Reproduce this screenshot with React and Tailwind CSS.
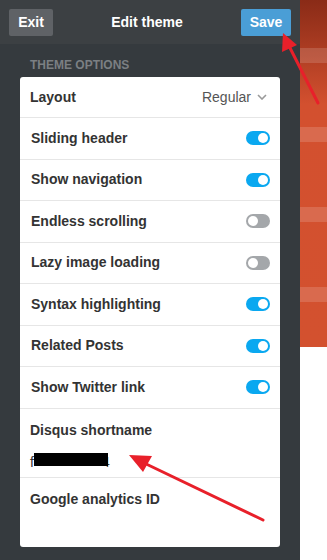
import React from "react";

const Toggle = ({ on }) => (
  <span
    className={`relative inline-block w-[24px] h-[14px] rounded-full ${
      on ? "bg-[#0aa8f0]" : "bg-[#a4a7aa]"
    }`}
  >
    <span
      className={`absolute top-[2px] w-[10px] h-[10px] rounded-full bg-white ${
        on ? "right-[2px]" : "left-[2px]"
      }`}
    />
  </span>
);

const options = [
  { label: "Sliding header", on: true },
  { label: "Show navigation", on: true },
  { label: "Endless scrolling", on: false },
  { label: "Lazy image loading", on: false },
  { label: "Syntax highlighting", on: true },
  { label: "Related Posts", on: true },
  { label: "Show Twitter link", on: true },
];

export default function App() {
  return (
    <div
      className="relative flex w-[327px] h-[560px] overflow-hidden"
      style={{ fontFamily: '"Liberation Sans", Arial, sans-serif' }}
    >
      {/* sidebar */}
      <div className="w-[300px] h-full bg-[#353a3e] flex flex-col">
        <div className="h-[44px] bg-[#3c4043] flex items-center justify-between px-[9px]">
          <button className="w-[44px] h-[27px] rounded-[2px] bg-[#5f6266] text-white text-[14px] font-bold">
            Exit
          </button>
          <span className="text-white text-[14px] font-bold">Edit theme</span>
          <button className="w-[50px] h-[27px] rounded-[2px] bg-[#4a9ed6] text-white text-[14px] font-bold">
            Save
          </button>
        </div>

        <div className="px-[30px] pt-[12px] h-[33px] text-[12px] font-bold text-[#7b7f83] uppercase">
          Theme options
        </div>

        <div className="mx-[20px] bg-white rounded-[3px] text-[14px] font-bold text-[#333]">
          <div className="h-[41px] flex items-center justify-between pl-[10px] pr-[13px] border-b border-[#e6e6e6]">
            <span>Layout</span>
            <span className="flex items-center gap-[6px] font-normal text-[#555]">
              Regular
              <svg width="10" height="6" viewBox="0 0 10 6">
                <path d="M1 1l4 4 4-4" fill="none" stroke="#9a9a9a" strokeWidth="1.6" />
              </svg>
            </span>
          </div>

          {options.map((o) => (
            <div
              key={o.label}
              className="h-[41.5px] flex items-center justify-between pl-[11px] pr-[10px] border-b border-[#e6e6e6]"
            >
              <span>{o.label}</span>
              <Toggle on={o.on} />
            </div>
          ))}

          <div className="h-[69px] pl-[10px] pt-[11px] border-b border-[#e6e6e6]">
            <div>Disqus shortname</div>
            <div className="relative mt-[11px] font-normal text-[#333] h-[16px]">
              f
              <span className="absolute left-[72px] top-0">4</span>
              <span className="absolute left-[4px] top-[1px] w-[74px] h-[13px] bg-black" />
            </div>
          </div>

          <div className="h-[69px] pl-[10px] pt-[11px]">Google analytics ID</div>
        </div>
      </div>

      {/* page behind */}
      <div className="flex-1 flex flex-col">
        <div className="h-[347px] bg-gradient-to-b from-[#8a2b17] via-[#d3502f] via-30% to-[#d3512f] flex flex-col">
          <div className="h-[48px]" />
          <div className="h-[15px] bg-white/15" />
          <div className="h-[64px]" />
          <div className="h-[15px] bg-white/15" />
          <div className="h-[65px]" />
          <div className="h-[15px] bg-white/15" />
          <div className="h-[65px]" />
          <div className="h-[15px] bg-white/15" />
        </div>
        <div className="flex-1 bg-white" />
      </div>

      {/* red annotation arrows */}
      <svg className="absolute inset-0 pointer-events-none" width="327" height="560">
        <line x1="318" y1="103" x2="288" y2="44" stroke="#e8202a" strokeWidth="3" strokeLinecap="round" />
        <polygon points="283,33 282,52 297,45" fill="#e8202a" />
        <line x1="263" y1="520" x2="142" y2="462" stroke="#e8202a" strokeWidth="3" strokeLinecap="round" />
        <polygon points="129,455 143,472 152,456" fill="#e8202a" />
      </svg>
    </div>
  );
}
